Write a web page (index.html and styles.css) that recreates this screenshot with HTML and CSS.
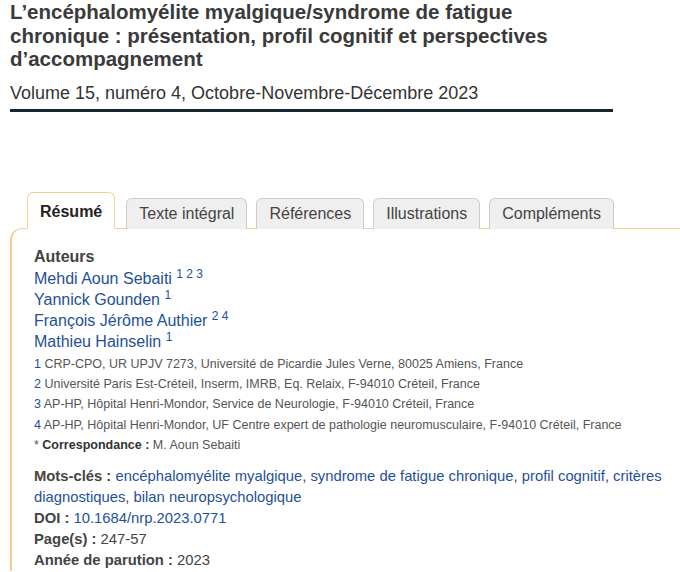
FILE: index.html
```html
<!DOCTYPE html>
<html lang="fr">
<head>
  <meta charset="UTF-8" />
  <meta name="viewport" content="width=device-width, initial-scale=1.0"/>
  <title>L’encéphalomyélite myalgique/syndrome de fatigue chronique</title>
  <link rel="stylesheet" href="styles.css">
</head>
<body>
  <div class="article-head">
    <h1>L’encéphalomyélite myalgique/syndrome de fatigue chronique : présentation, profil cognitif et perspectives d’accompagnement</h1>
    <p class="issue">Volume 15, numéro 4, Octobre-Novembre-Décembre 2023</p>
  </div>

  <div class="tabs">
    <ul class="tab-list">
      <li class="tab active">Résumé</li>
      <li class="tab">Texte intégral</li>
      <li class="tab">Références</li>
      <li class="tab">Illustrations</li>
      <li class="tab">Compléments</li>
    </ul>

    <div class="tab-panel">
      <h2>Auteurs</h2>
      <ul class="authors">
        <li><a href="#">Mehdi Aoun Sebaiti</a> <sup>1 2 3</sup></li>
        <li><a href="#">Yannick Gounden</a> <sup>1</sup></li>
        <li><a href="#">François Jérôme Authier</a> <sup>2 4</sup></li>
        <li><a href="#">Mathieu Hainselin</a> <sup>1</sup></li>
      </ul>
      <ul class="affiliations">
        <li><span class="num">1</span> CRP-CPO, UR UPJV 7273, Université de Picardie Jules Verne, 80025 Amiens, France</li>
        <li><span class="num">2</span> Université Paris Est-Créteil, Inserm, IMRB, Eq. Relaix, F-94010 Créteil, France</li>
        <li><span class="num">3</span> AP-HP, Hôpital Henri-Mondor, Service de Neurologie, F-94010 Créteil, France</li>
        <li><span class="num">4</span> AP-HP, Hôpital Henri-Mondor, UF Centre expert de pathologie neuromusculaire, F-94010 Créteil, France</li>
        <li>* <b>Correspondance :</b> M. Aoun Sebaiti</li>
      </ul>

      <div class="meta">
        <p><b>Mots-clés :</b> <a href="#">encéphalomyélite myalgique</a>, <a href="#">syndrome de fatigue chronique</a>, <a href="#">profil cognitif</a>, <a href="#">critères diagnostiques</a>, <a href="#">bilan neuropsychologique</a></p>
        <p><b>DOI :</b> <a href="#">10.1684/nrp.2023.0771</a></p>
        <p><b>Page(s) :</b> 247-57</p>
        <p><b>Année de parution :</b> 2023</p>
      </div>
    </div>
  </div>
</body>
</html>
```

FILE: styles.css
```css
body {
  font-family: 'Liberation Sans', Arial, sans-serif;
  color: #444;
  background-color: #fff;
  margin: 0;
  padding: 0 0 0 10px;
  overflow: hidden;
}

a {
  color: #24509a;
  text-decoration: none;
}

.article-head {
  width: 603px;
  border-bottom: 3px solid #17262d;
  padding-bottom: 5px;
}

h1 {
  font-size: 20.5px;
  line-height: 23.5px;
  color: #3a3a3a;
  margin: 0;
  padding-top: 0;
}

.issue {
  font-size: 18px;
  line-height: 22px;
  color: #333;
  margin: 11px 0 0;
}

.tabs {
  margin-top: 80px;
}

.tab-list {
  list-style: none;
  display: flex;
  align-items: flex-end;
  gap: 9px;
  margin: 0 0 -1px 17px;
  padding: 0;
  position: relative;
}

.tab {
  font-size: 16px;
  line-height: 18px;
  padding: 6px 12px 6px;
  background-color: #efefef;
  border: 1px solid #ccc;
  border-bottom: none;
  border-radius: 6px 6px 0 0;
  color: #444;
}

.tab.active {
  background-color: #fff;
  border-color: #f6cf8b;
  border-bottom: 1px solid #fff;
  font-weight: bold;
  color: #222;
  padding: 10px 12px 7px;
  margin-right: 2px;
}

.tab-panel {
  border-top: 1px solid #f6cf8b;
  border-left: 2px solid #f6cf8b;
  border-top-left-radius: 12px;
  margin-right: -20px;
  padding: 18px 0 0 22px;
}

h2 {
  font-size: 16px;
  line-height: 20px;
  color: #444;
  margin: 0 0 1px;
}

.authors {
  list-style: none;
  margin: 0;
  padding: 0;
  font-size: 16px;
  line-height: 21px;
}

.authors sup {
  font-size: 12px;
  color: #24509a;
  vertical-align: 6px;
  line-height: 0;
}

.affiliations {
  list-style: none;
  margin: 2px 0 0;
  padding: 0;
  font-size: 12.5px;
  line-height: 20.4px;
  color: #555;
}

.affiliations .num {
  color: #24509a;
}

.affiliations b {
  color: #333;
}

.meta {
  margin-top: 10px;
  font-size: 14.8px;
  line-height: 21px;
  padding-right: 10px;
}

.meta p {
  margin: 0;
}

.meta b {
  color: #444;
}
```
